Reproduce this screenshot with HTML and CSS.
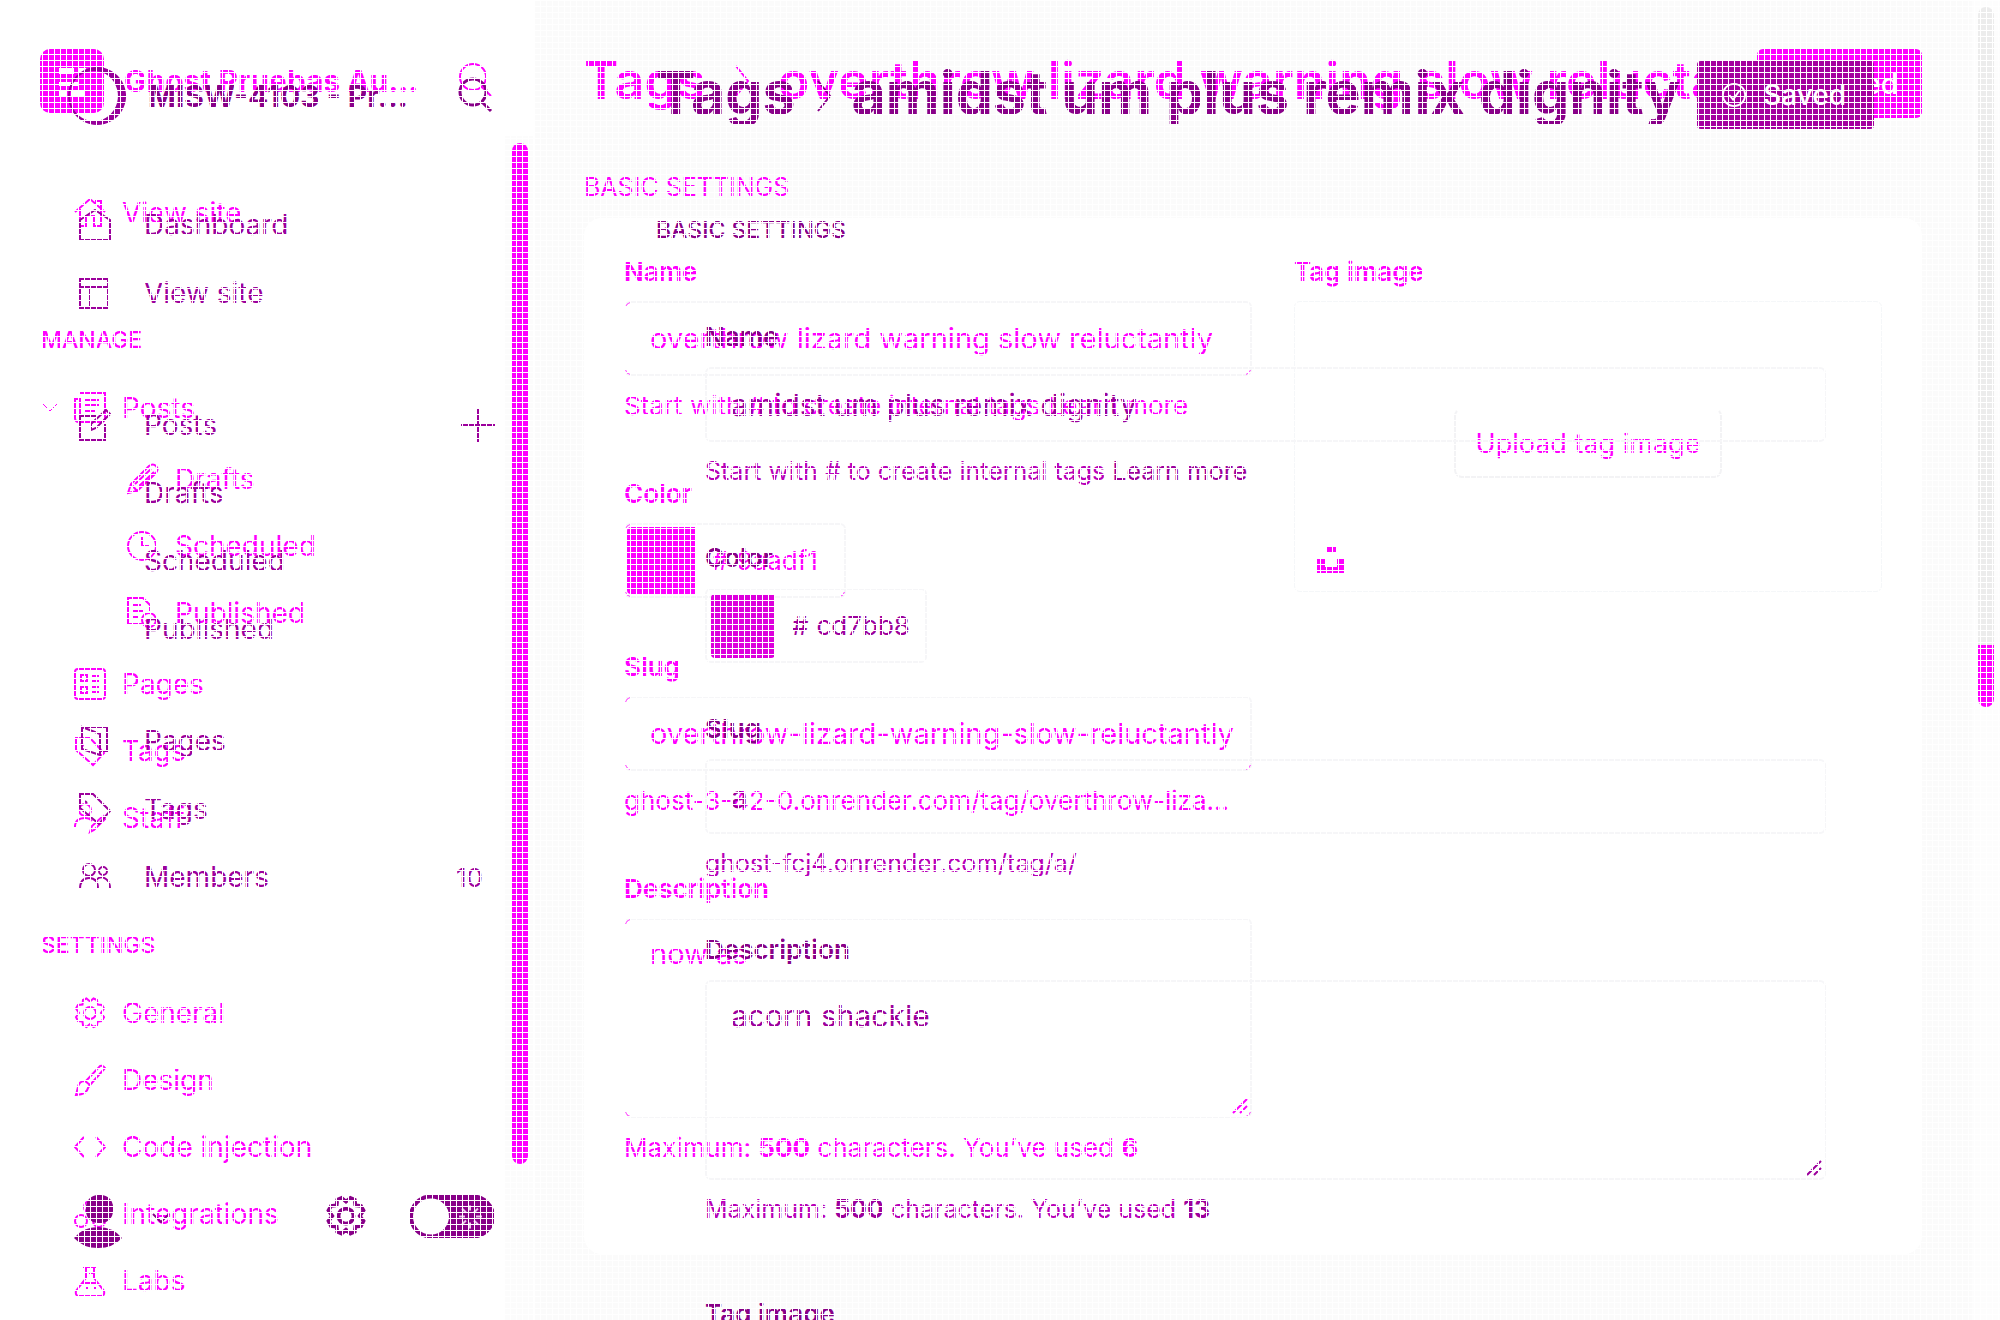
FILE: index.html
```html
<!DOCTYPE html>
<html lang="en">
<head>
<meta charset="utf-8">
<title>Tags</title>
<link rel="stylesheet" href="styles.css">
</head>
<body>
<svg class="defs" aria-hidden="true">
  <symbol id="gear" viewBox="0 0 32 32"><path d="M12.500 1.500l3.500 3 3.500-3 3.500 1.500 .5 4.500 4.500.5 2 3.500-3 4.500 3 4-2 4-4.500.500-.5 4-3.500 1.500-3.500-3-3.500 3-3.500-1.500-.5-4-4.500-.5-2-4 3-4-3-4.500 2-3.500 4.500-.5.5-4.500z"/><circle cx="16" cy="16" r="6"/></symbol>
  <symbol id="search" viewBox="0 0 36 38"><circle cx="15" cy="15" r="13"/><path d="M24 25l9 9"/></symbol>
  <symbol id="check" viewBox="0 0 28 28"><circle cx="14" cy="14" r="12"/><path d="M9 14l4 5 7-10"/></symbol>
</svg>
<div class="stage">

  <div class="layer first">
    <aside class="sidebar">
      <header class="site">
        <svg class="logo" viewBox="0 0 64 64"><rect width="64" height="64" rx="10" fill="#f0f"/><path d="M19 19h15v6H19zM38 19h8v5h-8zM19 33h19v4H19zM19 42h8v5h-8zM31 42h13v5H31z" fill="#fff"/></svg>
        <strong class="site-name">Ghost Pruebas Au...</strong>
        <button class="icon-button" aria-label="Search"><svg class="search"><use href="#search"/></svg></button>
      </header>
      <nav>
        <a class="item" href="#"><svg class="icon" viewBox="0 0 32 32"><path d="M1 15L16 2l15 13M6 12v17h6V19h8v10h7V12M22 7V4h5v8"/></svg>View site</a>
        <h2 class="group">MANAGE</h2>
        <a class="item parent" href="#"><svg class="chevron" viewBox="0 0 16 10"><path d="M1 1l7 7 7-7"/></svg><svg class="icon" viewBox="0 0 32 32"><path d="M6 1h25v25q0 4-4 4H5q-4 0-4-4V7h5v18M11 8h14M11 13h14M11 19h10"/></svg>Posts</a>
        <div class="sub">
          <a class="item" href="#"><svg class="icon" viewBox="0 0 32 32"><path d="M1 30l3-9L22 3q4-3 7 0t0 7L10 28zM4 21l6 7M8 21L24 6M11 24L27 9"/></svg>Drafts</a>
          <a class="item" href="#"><svg class="icon" viewBox="0 0 32 32"><circle cx="15" cy="16" r="14"/><path d="M15 7v9h7"/></svg>Scheduled</a>
          <a class="item" href="#"><svg class="icon" viewBox="0 0 32 32"><path d="M15 27H1V1h15l7 7v6M6 8h8M6 14h10M6 20h6"/><circle cx="22" cy="23" r="7"/><path d="M19 23l2 3 4-5"/></svg>Published</a>
        </div>
        <a class="item" href="#"><svg class="icon" viewBox="0 0 32 32"><rect x="1" y="1" width="30" height="30" rx="3"/><path d="M7 7h6v6H7zM7 19h6v6H7zM18 8h7M18 13h7M18 19h7M18 24h7"/></svg>Pages</a>
        <a class="item" href="#"><svg class="icon" viewBox="0 0 32 32"><path d="M2 3h14l14 15-11 12L2 15zM7 8l3 3"/></svg>Tags</a>
        <a class="item" href="#"><svg class="icon" viewBox="0 0 32 32"><circle cx="11" cy="8" r="6"/><path d="M1 25q0-9 10-9 5 0 7 3M16 30l2-6 11-10 2 3-11 11z"/></svg>Staff</a>
        <h2 class="group">SETTINGS</h2>
        <a class="item" href="#"><svg class="icon"><use href="#gear"/></svg>General</a>
        <a class="item" href="#"><svg class="icon" viewBox="0 0 32 32"><path d="M11 18L26 2q3-1 5 2L16 21M11 17q-6 0-7 6l-2 8q11-1 12-7l2-3z"/></svg>Design</a>
        <a class="item" href="#"><svg class="icon" viewBox="0 0 32 32"><path d="M10 6L1 16l9 10M22 6l9 10-9 10"/></svg>Code injection</a>
        <a class="item" href="#"><svg class="icon" viewBox="0 0 32 32"><circle cx="7" cy="23" r="6"/><circle cx="25" cy="23" r="6"/><circle cx="16" cy="9" r="6"/></svg>Integrations</a>
        <a class="item" href="#"><svg class="icon" viewBox="0 0 32 32"><path d="M9 2h14M12 2v11L2 26q-1 5 3 5h22q4 0 3-5L20 13V2M8 18h16M20 8h-5M12 23h2M20 23h2"/></svg>Labs</a>
      </nav>
      <div class="track"><div class="thumb"></div></div>
    </aside>
    <main class="main">
      <header class="head">
        <h1 class="title">Tags <svg class="sep" viewBox="0 0 16 36"><path d="M2 3l12 15L2 33"/></svg> overthrow lizard warning slow reluctantly</h1>
        <button class="save"><svg class="check"><use href="#check"/></svg>Saved</button>
      </header>
      <h2 class="section">BASIC SETTINGS</h2>
      <form class="card">
        <div class="fields">
          <label class="label" for="a-name">Name</label>
          <div class="box"><input id="a-name" value="overthrow lizard warning slow reluctantly"></div>
          <p class="hint">Start with # to create internal tags <a href="#">Learn more</a></p>
          <label class="label" for="a-color">Color</label>
          <div class="box color"><span class="swatch"></span><span class="hash">#</span><input id="a-color" value="9aadf1"></div>
          <label class="label after-box" for="a-slug">Slug</label>
          <div class="box"><input id="a-slug" value="overthrow-lizard-warning-slow-reluctantly"></div>
          <p class="hint">ghost-3-42-0.onrender.com/tag/overthrow-liza...</p>
          <label class="label" for="a-desc">Description</label>
          <div class="box area"><textarea id="a-desc">now as</textarea><svg class="grip" viewBox="0 0 16 16"><path d="M1 15L15 1M8 15l7-7"/></svg></div>
          <p class="hint">Maximum: <b>500</b> characters. You’ve used <b>6</b></p>
        </div>
        <div class="media">
          <span class="label">Tag image</span>
          <div class="drop">
            <button type="button" class="upload">Upload tag image</button>
            <svg class="unsplash" viewBox="0 0 28 26"><path d="M10 0h9v5h-9zM0 12h8v8h12v-8h8v14H0z" fill="#f0f"/></svg>
          </div>
        </div>
      </form>
      <div class="page-track"><div class="page-thumb"></div></div>
    </main>
  </div>

  <div class="layer second">
    <aside class="sidebar">
      <header class="site">
        <svg class="logo" viewBox="0 0 58 58"><path fill-rule="evenodd" fill="#98009a" d="M29 0a29 29 0 1 0 .1 0zM26 4a24 25 0 1 1-.1 0z"/></svg>
        <strong class="site-name">MISW-4103 - Pr...</strong>
        <button class="icon-button" aria-label="Search site"><svg class="search"><use href="#search"/></svg></button>
      </header>
      <nav>
        <a class="item" href="#"><svg class="icon" viewBox="0 0 32 32"><path d="M1 31V11L16 1l15 10v20z"/></svg>Dashboard</a>
        <a class="item" href="#"><svg class="icon" viewBox="0 0 32 32"><path d="M1 2h28v29H1zM1 10h28M11 10v21"/></svg>View site</a>
        <a class="item posts" href="#"><svg class="icon" viewBox="0 0 32 32"><path d="M18 7H1v24h25V15M12 21v-6L27 1l4 4-14 14z"/></svg>Posts<svg class="plus" viewBox="0 0 34 34"><path d="M17 0v34M0 17h34"/></svg></a>
        <div class="sub">
          <a class="item" href="#">Drafts</a>
          <a class="item" href="#">Scheduled</a>
          <a class="item" href="#">Published</a>
        </div>
        <a class="item pages" href="#"><svg class="icon" viewBox="0 0 32 32"><path d="M3 2h25v24h-7M3 2l18 7v21L3 24z"/></svg>Pages</a>
        <a class="item" href="#"><svg class="icon" viewBox="0 0 32 32"><path d="M1 1h13l17 17-11 13L1 15zM6 8l2 2"/></svg>Tags</a>
        <a class="item" href="#"><svg class="icon" viewBox="0 0 32 32"><circle cx="10" cy="9" r="6"/><circle cx="24" cy="10" r="4"/><path d="M1 28q0-11 9-11t9 11M17 19q5-5 10-1 4 3 4 9"/></svg>Members<span class="count">10</span></a>
      </nav>
      <footer class="foot">
        <svg class="user" viewBox="0 0 48 54"><rect x="12" width="27" height="28" rx="12"/><path d="M0 43q9-11 24-11t24 11q-9 10-24 10T0 43z"/></svg>
        <svg class="more" viewBox="0 0 18 10"><path d="M1 1l8 8 8-8"/></svg>
        <svg class="cog"><use href="#gear"/></svg>
        <label class="switch"><input type="checkbox" aria-label="Night mode"><svg viewBox="0 0 84 42"><rect width="84" height="42" rx="21" fill="#880088"/><circle cx="21" cy="21" r="19" fill="#fff"/><path d="M49 21h6M60 10v5M60 27v6M66 21h6M52 13l4 4M68 13l-4 4M52 29l4-4M68 29l-4-4" stroke="#eac4ea" stroke-width="2"/></svg></label>
      </footer>
    </aside>
    <main class="main">
      <header class="head">
        <h1 class="title">Tags <svg class="sep" viewBox="0 0 16 36"><path d="M2 3l12 15L2 33"/></svg> amidst um plus remix dignity</h1>
        <button class="save"><svg class="check"><use href="#check"/></svg>Saved</button>
      </header>
      <h2 class="section">BASIC SETTINGS</h2>
      <form class="fields">
        <label class="label" for="b-name">Name</label>
        <div class="box"><input id="b-name" value="amidst um plus remix dignity"></div>
        <p class="hint">Start with # to create internal tags <a href="#">Learn more</a></p>
        <label class="label" for="b-color">Color</label>
        <div class="box color"><span class="swatch"></span><span class="hash">#</span><input id="b-color" value="cd7bb8"></div>
        <label class="label after-box" for="b-slug">Slug</label>
        <div class="box"><input id="b-slug" value="a"></div>
        <p class="hint">ghost-fcj4.onrender.com/tag/a/</p>
        <label class="label" for="b-desc">Description</label>
        <div class="box area"><textarea id="b-desc">acorn shackle</textarea><svg class="grip" viewBox="0 0 16 16"><path d="M1 15L15 1M8 15l7-7"/></svg></div>
        <p class="hint">Maximum: <b>500</b> characters. You’ve used <b>13</b></p>
        <span class="label last">Tag image</span>
      </form>
    </main>
  </div>

</div>
</body>
</html>
```
FILE: styles.css
```css
* { box-sizing: border-box; }
body { margin: 0; background: #fff; font-family: Inter, "Liberation Sans", sans-serif; font-size: 28px; }
h1, h2, p { margin: 0; }
a { color: inherit; text-decoration: none; }
button, input, textarea { font: inherit; color: inherit; border: 0; background: none; padding: 0; margin: 0; }
svg { display: block; flex: none; fill: none; stroke: currentColor; stroke-width: 2; }
.defs { position: absolute; width: 0; height: 0; }

/* two page layers share one cell, under a fine white mesh */
.stage { display: grid; height: 100vh; overflow: hidden; position: relative; }
.stage::after {
  content: ""; position: absolute; inset: 0; pointer-events: none;
  background:
    repeating-linear-gradient(to right, #fff 0 1px, transparent 1px 6px),
    repeating-linear-gradient(to bottom, #fff 0 1px, transparent 1px 6px);
}
.layer { grid-area: 1 / 1; display: flex; min-width: 0; height: 100vh; }
.first { color: #f0f; }
.second { color: #9c009c; }

/* sidebar */
.sidebar { position: relative; width: 535px; flex: none; display: flex; flex-direction: column; }
.first .sidebar { background: #fff; padding-top: 49px; }
.second .sidebar { padding-top: 67px; }
.site { display: flex; align-items: center; padding-right: 41px; font-size: 30px; }
.first .site { padding-left: 40px; gap: 20px; margin-bottom: 66px; }
.second .site { padding-left: 68px; gap: 22px; margin-bottom: 66px; color: #880088; }
.first .logo { width: 64px; height: 64px; }
.second .logo { width: 58px; height: 58px; }
.logo, .user { stroke: none; }
.site-name { flex: 1; font-weight: 700; white-space: nowrap; }
.search { width: 36px; height: 38px; }
.second .search { stroke-width: 3; }
.item { display: flex; align-items: center; }
.first .item { height: 67px; gap: 16px; padding-left: 74px; }
.second .item { height: 68px; gap: 33px; padding: 0 40px 0 79px; }
.icon { width: 32px; height: 32px; }
.first .parent { padding-left: 42px; }
.chevron { width: 16px; height: 10px; stroke-width: 1; }
.group { font-size: 23px; line-height: 32px; font-weight: 500; padding-left: 41px; margin: 78px 0 18px; }
.first .sub { padding: 4px 0 4px; }
.first .sub .item { padding-left: 127px; }
.second .sub .item { padding-left: 144px; }
.second .posts { margin-top: 64px; }
.second .pages { margin-top: 44px; }
.plus { width: 34px; height: 34px; margin-left: auto; }
.count { margin-left: auto; margin-right: 12px; font-size: 26px; }
.track { position: absolute; top: 136px; bottom: 0; right: 2px; width: 28px; padding: 7px 5px 156px 7px; background: #fcfcfc; }
.thumb { height: 100%; border-radius: 8px; background: #f0f; }
.foot { margin-top: auto; display: flex; align-items: flex-start; padding: 0 41px 71px 74px; color: #880088; }
.user { width: 48px; height: 54px; fill: #880088; }
.more { width: 18px; height: 10px; margin: 18px 0 0 30px; }
.cog { width: 40px; height: 42px; margin-left: auto; stroke-width: 3; }
.switch { margin-left: 44px; position: relative; }
.switch svg { width: 84px; height: 43px; }
.switch input { position: absolute; inset: 0; opacity: 0; }

/* main column */
.main { flex: 1; min-width: 0; position: relative; }
.first .main { background: #fbfbfb; padding: 49px 78px 0 49px; }
.second .main { padding: 61px 126px 0 121px; }
.head { display: flex; gap: 10px; align-items: flex-start; }
.title { flex: 1; min-width: 0; overflow: hidden; white-space: nowrap; line-height: 63px; }
.first .title { font-size: 52px; font-weight: 600; }
.second .title { font-size: 59px; font-weight: 700; color: #880088; }
.sep { display: inline-block; width: 16px; height: 36px; margin: 0 15px; }
.second .sep { margin: 0 6px; }
.save { display: flex; align-items: center; gap: 16px; color: #fff; font-weight: 500; font-size: 28px; }
.first .save { height: 69px; padding: 0 24px 0 16px; border-radius: 6px; background: #f0f; }
.second .save { height: 68px; padding: 0 28px 0 24px; border-radius: 4px; background: #a4009f; }
.check { width: 26px; height: 26px; }
.section { line-height: 30px; }
.first .section { margin: 54px 0 16px; font-weight: 400; font-size: 25px; }
.second .section { margin: 86px 0 0; font-weight: 500; font-size: 23px; color: #880088; }
.card { display: grid; grid-template-columns: 628fr 588fr; gap: 42px; padding: 39px 40px 90px 40px; background: #fff; border-radius: 18px; }
.second .fields { padding: 21px 48px 0 49px; }
.label { display: block; font-size: 26px; line-height: 30px; font-weight: 600; margin: 56px 0 15px; }
.first .fields .label { margin-top: 57px; }
.first .fields .after-box { margin-top: 54px; }
.second .label { color: #880088; }
.second .after-box { margin-top: 51px; }
.first .fields .label:first-child, .media .label { margin-top: 0; }
.first .label { margin-bottom: 14px; }
.second .label.last { margin-top: 74px; }
.box { position: relative; height: 75px; border: 2px solid #f6f6f8; border-radius: 6px; display: flex; align-items: center; }
.first .box { border-left-color: transparent; }
.box input { width: 100%; padding: 0 16px 0 24px; line-height: 40px; }
.first .box { font-size: 29px; }
.second .box { font-size: 30px; }
.box textarea { width: 100%; height: 100%; padding: 14px 24px; line-height: 40px; resize: none; }
.box.area { height: 200px; }
.grip { position: absolute; right: 2px; bottom: 2px; width: 16px; height: 16px; }
.first .box::before {
  content: ""; position: absolute; inset: -1px; border: 1px solid #f0f; border-radius: 6px; pointer-events: none;
  -webkit-mask:
    linear-gradient(#000 0 0) 0 0 / 5px 5px no-repeat,
    linear-gradient(#000 0 0) 0 100% / 5px 5px no-repeat,
    linear-gradient(#000 0 0) 100% 100% / 5px 5px no-repeat;
}
.hint { line-height: 32px; white-space: nowrap; }
.first .hint { font-size: 26px; margin-top: 14px; }
.second .hint { font-size: 25px; margin-top: 13px; color: #b800b8; }
.second .hint a, .second .hint b { color: #9c009c; }
.box.color { width: 222px; }
.swatch { flex: none; width: 68px; height: 67px; margin-left: 1px; background: #f0f; border-radius: 4px 0 0 4px; }
.second .swatch { width: 64px; height: 64px; margin-left: 4px; background: #dd00dd; border-radius: 4px; }
.hash { padding-left: 17px; font-size: 26px; }
.color input { padding: 0 0 0 8px; font-size: 26px; }
.drop { height: 291px; border: 1px solid #f5f7f9; border-radius: 6px; display: grid; grid-template-rows: 106px 70px 1fr; justify-items: center; }
.upload { grid-row: 2; padding: 0 20px; border: 2px solid #f3f3f5; border-top-color: transparent; border-radius: 8px; font-size: 27px; white-space: nowrap; }
.unsplash { grid-row: 3; justify-self: start; align-self: end; width: 28px; height: 26px; margin: 0 0 18px 22px; stroke: none; }

/* page scrollbar */
.page-track { position: absolute; top: 0; bottom: 0; right: 0; width: 28px; padding: 7px 6px; background: #fdfdfd; }
.page-thumb { width: 16px; height: 700px; border-radius: 8px; background: linear-gradient(#ececec 0 638px, #f0f 638px); }
```
